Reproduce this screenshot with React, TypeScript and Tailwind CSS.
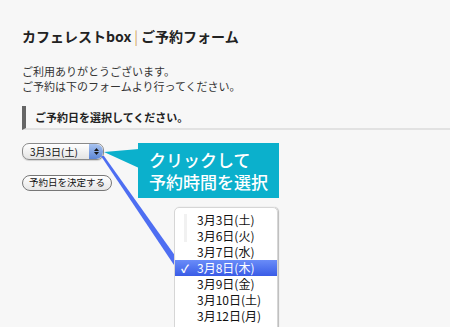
const dates = [
  '3月3日(土)',
  '3月6日(火)',
  '3月7日(水)',
  '3月8日(木)',
  '3月9日(金)',
  '3月10日(土)',
  '3月12日(月)',
  '3月13日(火)',
]

function Stepper() {
  return (
    <span className="flex h-full w-[14px] flex-col items-center justify-center gap-[1px] rounded-r-[7px] bg-gradient-to-b from-[#a9c3ef] to-[#5d87d6]">
      <svg className="h-[3px] w-[5px]" viewBox="0 0 5 3">
        <path d="M2.5 0L5 3H0z" fill="#1a1a1a" />
      </svg>
      <svg className="h-[3px] w-[5px]" viewBox="0 0 5 3">
        <path d="M0 0h5L2.5 3z" fill="#1a1a1a" />
      </svg>
    </span>
  )
}

export default function App() {
  return (
    <div className="relative h-[327px] w-[450px] overflow-hidden bg-[#f7f7f7] font-['Noto_Sans_CJK_JP','Noto_Sans',sans-serif] text-[#333]">
      <div className="pt-[26px]">
        <h1 className="pl-[22px] text-[14px] font-bold leading-[20px] text-[#222]">
          カフェレストbox<span className="mx-[3px] font-normal text-[#d2a65c]">|</span>ご予約フォーム
        </h1>

        <p className="mt-[18px] pl-[22px] text-[11px] leading-[15px] text-[#333]">
          ご利用ありがとうございます。
          <br />
          ご予約は下のフォームより行ってください。
        </p>

        {/* section heading */}
        <div className="ml-[22px] mt-[12px] flex h-[24px] items-center border-b-2 border-l-4 border-b-[#e2e2e2] border-l-[#666] pl-[9px]">
          <h2 className="text-[11px] font-bold text-[#222]">ご予約日を選択してください。</h2>
        </div>

        <div className="mt-[13px] pl-[22px]">
          <div className="flex h-[17px] w-[82px] items-center overflow-hidden rounded-[7px] border border-[#8a8a8a] bg-gradient-to-b from-white to-[#e4e4e4] shadow-[0_1px_1px_rgba(0,0,0,0.15)]">
            <span className="flex-1 pl-[7px] text-[10px] leading-none text-[#111]">3月3日(土)</span>
            <Stepper />
          </div>
          <button className="mt-[15px] flex h-[16px] w-[90px] items-center justify-center rounded-full border border-[#777] bg-gradient-to-b from-white to-[#e6e6e6] text-[9.5px] leading-none text-[#111]">
            予約日を決定する
          </button>
        </div>
      </div>

      {/* connector line from select to dropdown */}
      <svg className="absolute left-0 top-0 h-[327px] w-[450px]" viewBox="0 0 450 327">
        <polygon points="101,156 104,156 176,257 176,268" fill="#4e6ef2" />
        <polygon points="104,152 139,149 139,168" fill="#0bb0cc" />
      </svg>

      {/* callout */}
      <div className="absolute left-[138px] top-[143px] flex h-[55px] w-[141px] flex-col justify-center whitespace-nowrap bg-[#0bb0cc] pl-[11px] text-[17px] font-medium leading-[22px] text-white">
        <span>クリックして</span>
        <span>予約時間を選択</span>
      </div>

      {/* dropdown menu */}
      <div className="absolute left-[174px] top-[207px] h-[130px] w-[104px] rounded-t-[5px] border border-[#d6d6d6] bg-white/95 pt-[4px] shadow-[1px_0_1px_rgba(0,0,0,0.25)]">
        <div className="absolute left-[9px] top-[6px] h-[28px] w-[3px] bg-[#f1f1f1]" />
        {dates.map((d, i) => (
          <div
            key={d}
            className={
              i === 3
                ? 'relative flex h-[16px] items-center bg-gradient-to-b from-[#6a8cf8] to-[#3a5be6] pl-[22px] text-[12px] leading-none text-white'
                : 'relative flex h-[16px] items-center pl-[22px] text-[12px] leading-none text-[#111]'
            }
          >
            {i === 3 && <span className="absolute left-[6px] text-[11px] font-bold">✓</span>}
            {d}
          </div>
        ))}
      </div>
    </div>
  )
}
